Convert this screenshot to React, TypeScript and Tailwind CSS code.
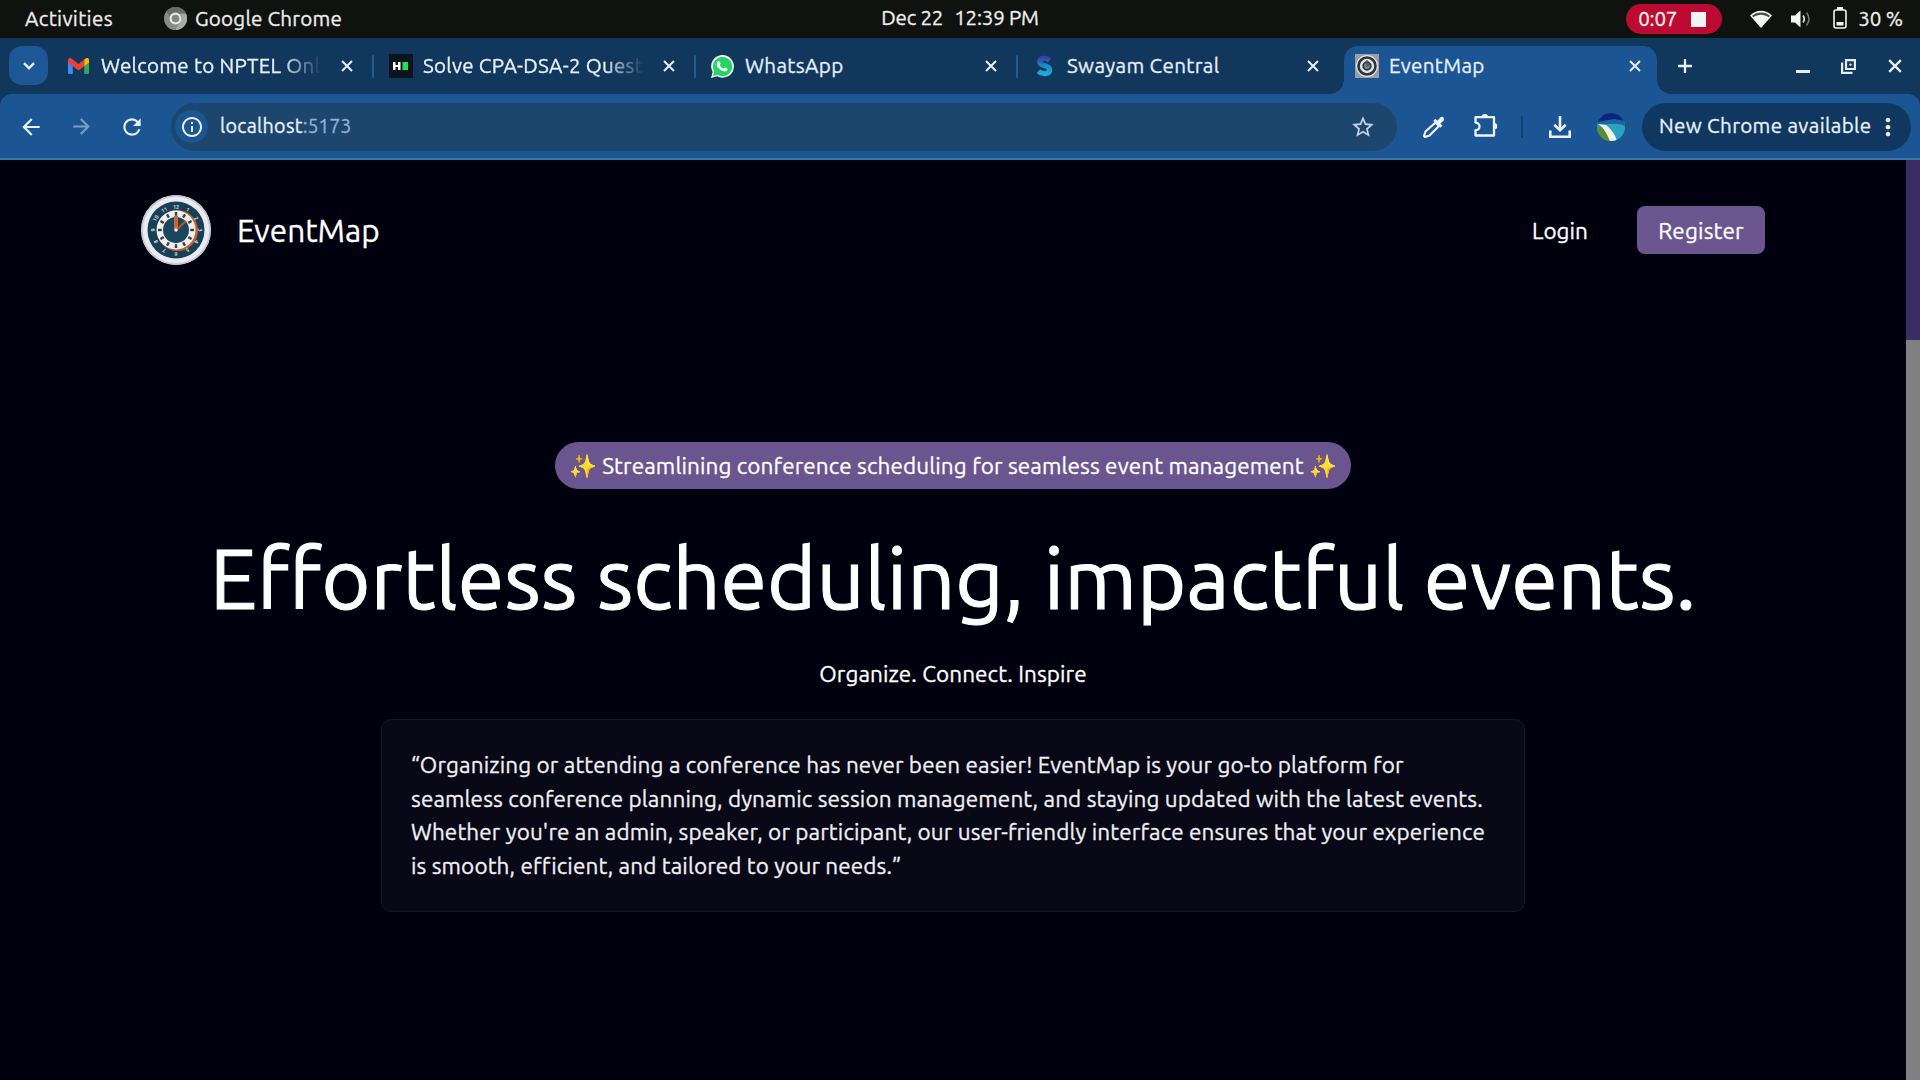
import type { ReactNode } from 'react';
import {
  MdArrowBack,
  MdArrowForward,
  MdRefresh,
  MdStarBorder,
  MdInfoOutline,
  MdMoreVert,
} from 'react-icons/md';

function Cross({ className }: { className: string }) {
  return (
    <svg viewBox="0 0 12 12" className={className} fill="none" stroke="currentColor" strokeWidth="2">
      <path d="M1 1l10 10M11 1L1 11" />
    </svg>
  );
}

function TopBar() {
  return (
    <header className="grid h-[38px] shrink-0 grid-cols-3 items-center bg-[#10120f] text-[20.6px] leading-none text-[#eeeeec]">
      <div className="flex items-center pt-px pl-[25px]">
        <span className="w-[139px] tracking-[0.35px]">Activities</span>
        <svg viewBox="0 0 24 24" className="mt-[-2px] mr-[8px] size-[23px] shrink-0">
          <circle cx="12" cy="12" r="12" fill="#8a8a88" />
          <path d="M12 0a12 12 0 0 1 11 7H12a5 5 0 0 0-5 4L2.500 5A12 12 0 0 1 12 0z" fill="#6b6b69" />
          <path d="M23 7a12 12 0 0 1-11 17l5-9a5 5 0 0 0 0-8z" fill="#a9a9a7" />
          <circle cx="12" cy="12" r="6.200" fill="#e8e8e6" />
          <circle cx="12" cy="12" r="4" fill="#858583" />
        </svg>
        <span className="tracking-[0.2px]">Google Chrome</span>
      </div>
      <div className="flex -translate-y-px justify-center gap-[11px] tracking-[-0.25px]">
        <span>Dec 22</span>
        <span>12:39 PM</span>
      </div>
      <div className="flex items-center justify-end pr-[17px]">
        <div className="mr-[28px] flex h-[30px] w-[96px] items-center justify-between rounded-full bg-[#bd0a32] pr-[16px] pl-[12px]">
          <span className="tracking-[-0.2px]">0:07</span>
          <span className="size-[15px] bg-[#f4f4f2]" />
        </div>
        <svg viewBox="0 0 22 18" className="mr-[19px] h-[18px] w-[22px]">
          <path d="M0 5.500C6-1 16-1 22 5.500L11 18z" fill="#f4f4f2" />
          <path d="M2 5.800C7 1.300 15 1.300 20 5.800L18.800 7.300C14 3.800 8 3.800 3.200 7.300z" fill="#4c4d4a" />
        </svg>
        <svg viewBox="0 0 20 18" className="mr-[22px] h-[18px] w-[20px]" fill="none">
          <path d="M0 5.500h4L9.500 0.500v17L4 12.500H0z" fill="#f4f4f2" />
          <path d="M12 5.500q2.500 3.500 0 7" stroke="#d8d8d6" strokeWidth="1.800" />
          <path d="M15.500 2.500q5 6.500 0 13" stroke="#777775" strokeWidth="1.600" />
        </svg>
        <svg viewBox="0 0 14 22" className="mr-[11px] mb-[3px] h-[22px] w-[14px]">
          <path d="M4 0h6v3H4z" fill="#f4f4f2" />
          <rect x="1" y="3" width="12" height="18" rx="2" fill="none" stroke="#f4f4f2" strokeWidth="1.600" />
          <path d="M3.500 15h7v3.500h-7z" fill="#f4f4f2" />
        </svg>
        <span className="tracking-[-0.1px]">30 %</span>
      </div>
    </header>
  );
}

function Tab({ icon, title, active, divider, fade }: { icon: ReactNode; title: string; active?: boolean; divider?: boolean; fade?: boolean }) {
  return (
    <div className="relative flex h-[48px] w-[322px] shrink-0 pl-[4px]">
      {active && (
        <>
          <span className="absolute bottom-0 left-[-10px] size-[14px] bg-[radial-gradient(circle_at_0_0,transparent_13.5px,#1b5593_14px)]" />
          <span className="absolute right-[-9px] bottom-0 size-[14px] bg-[radial-gradient(circle_at_100%_0,transparent_13.5px,#1b5593_14px)]" />
        </>
      )}
      <div className={active ? 'flex h-full w-[313px] rounded-t-[14px] bg-[#1b5593] pl-[12px]' : 'flex h-full w-[313px] pl-[12px]'}>
        <div className="flex h-[40px] items-center">
          <div className="flex w-[33px] shrink-0 items-center">{icon}</div>
          <span
            className={
              fade
                ? 'w-[221px] overflow-hidden whitespace-nowrap leading-[30px] tracking-[0.25px] [mask-image:linear-gradient(to_right,black_82%,transparent)]'
                : 'w-[221px] whitespace-nowrap leading-[30px] tracking-[0.33px]'
            }
          >
            {title}
          </span>
          <Cross className="ml-[19px] size-[12px] shrink-0" />
        </div>
      </div>
      {divider && <span className="absolute top-[9px] right-0 h-[23px] w-[2px] rounded-full bg-[#225c95]" />}
    </div>
  );
}

const gmail = (
  <svg viewBox="0 0 21 16" className="h-[16px] w-[21px]">
    <path d="M0 2.500L4.800 6v10H1.500A1.500 1.500 0 0 1 0 14.500z" fill="#4285f4" />
    <path d="M21 2.500L16.200 6v10h3.300a1.500 1.500 0 0 0 1.500-1.500z" fill="#34a853" />
    <path d="M16.200 1.500L18 .3c1.300-.8 3 0 3 1.700v2.500l-4.800 3.800z" fill="#fbbc04" />
    <path d="M0 2C0 .3 1.700-.5 3 .3L10.500 6 16.200 1.500v6.800L10.500 12.500 4.800 8.300 0 4.500z" fill="#ea4335" />
  </svg>
);

const hackerrank = (
  <svg viewBox="0 0 24 24" className="ml-[-1px] size-[24px]">
    <path d="M0 0h24v24H0z" fill="#0d141e" />
    <path d="M4 8h2.500v3H9V8h2.500v8H9v-3H6.500v3H4z" fill="#fff" />
    <path d="M13.500 8H19v8h-5.500z" fill="#1de34f" />
  </svg>
);

const whatsapp = (
  <svg viewBox="0 0 24 24" className="ml-[-1px] size-[23px]">
    <path d="M0 24l1.700-6.200A11.900 11.900 0 1 1 6.300 22.300z" fill="#e8fbee" />
    <path d="M2 22l1.400-4.900A10 10 0 1 1 7 20.700z" fill="#25d366" />
    <path
      d="M8.200 6.500c.5-.1.800 0 1 .5l.8 1.900c.1.300 0 .6-.9 1.600.8 1.700 2.200 3 4.100 3.800.9-1 1.100-1.400 1.500-1.200l2.200 1c.5.300.5 2-.8 2.700-1 .7-2.600.6-4.500-.3-2.300-1-4-3-4.900-4.400-1.200-2-.8-4.300.3-5.200.3-.3.700-.4 1.200-.4z"
      fill="#fff"
    />
  </svg>
);

const swayam = (
  <svg viewBox="0 0 18 22" className="ml-[2px] h-[22px] w-[17px]" fill="none">
    <defs>
      <linearGradient id="swayam" x1="0" y1="0" x2="0" y2="1">
        <stop offset="0" stopColor="#3d3fa8" />
        <stop offset=".4" stopColor="#1b86bf" />
        <stop offset="1" stopColor="#20a8d8" />
      </linearGradient>
    </defs>
    <path d="M14.500 5C11 2 4 2 4 6.500c0 5 10.500 3 10.500 8.500 0 5-8 5-12 1.500" stroke="url(#swayam)" strokeWidth="5.600" />
  </svg>
);

const eventmap = (
  <svg viewBox="0 0 24 24" className="ml-[-1px] size-[24px]" fill="none">
    <path d="M0 0h24v24H0z" fill="#9c9e9f" />
    <circle cx="12" cy="12" r="11" fill="#e4e4e2" />
    <circle cx="12" cy="12" r="8.500" stroke="#2a3440" strokeWidth="2.600" />
    <circle cx="12" cy="12" r="3.800" fill="#7b8790" stroke="#2a3440" strokeWidth="1.800" />
    <path d="M12 6v6l2.500-2" stroke="#5a4a42" strokeWidth="1.200" />
  </svg>
);

function TabStrip() {
  return (
    <div className="flex h-[56px] shrink-0 bg-[#11375d] pt-[8px] text-[20.6px] leading-none text-[#e6eef8]">
      <div className="w-[52px] shrink-0 pl-[9px]">
        <div className="flex h-[39px] w-[39px] items-center justify-center rounded-[13px] bg-[#1d5795]">
          <svg viewBox="0 0 12 8" className="h-[8px] w-[12px]" fill="none" stroke="currentColor" strokeWidth="2.400">
            <path d="M1 1.200l5 5 5-5" />
          </svg>
        </div>
      </div>
      <Tab icon={gmail} title="Welcome to NPTEL Onl" divider fade />
      <Tab icon={hackerrank} title="Solve CPA-DSA-2 Quest" divider fade />
      <Tab icon={whatsapp} title="WhatsApp" divider />
      <Tab icon={swayam} title="Swayam Central" />
      <Tab icon={eventmap} title="EventMap" active />
      <div className="flex h-[40px] flex-1 items-center pr-[18px] pl-[16px]">
        <svg viewBox="0 0 14 14" className="size-[14px]" fill="none" stroke="currentColor" strokeWidth="2.300">
          <path d="M7 0v14M0 7h14" />
        </svg>
        <span className="mt-[11px] ml-auto h-[3px] w-[14px] bg-[#e6eef8]" />
        <svg viewBox="0 0 15 15" className="ml-[31px] size-[15px]" fill="none" stroke="currentColor" strokeWidth="2.200">
          <path d="M5 1.100h8.900v8.900H5zM1.100 3.500v10.400H11.500" />
          <path d="M8.800 5h1.300v1.300H8.800z" strokeWidth="1" />
        </svg>
        <Cross className="ml-[32px] size-[14px]" />
      </div>
    </div>
  );
}

function Toolbar() {
  return (
    <div className="h-[66px] shrink-0 bg-[#11375d]">
      <div className="flex h-full items-center rounded-t-[12px] border-b-2 border-[#3b74a8] bg-[#1b5593] pt-px pr-[9px] text-[19.7px] leading-none text-[#e8f0fa]">
        <MdArrowBack className="ml-[18px] size-[26px]" />
        <MdArrowForward className="ml-[25px] size-[25px] text-[#7d9fc4]" />
        <MdRefresh className="ml-[25px] size-[26px]" />
        <div className="ml-[26px] flex h-[48px] w-[1226px] items-center rounded-full bg-[#1c466e] pr-[21px] pl-[4px]">
          <span className="flex size-[33px] items-center justify-center rounded-full bg-[#1b5593]">
            <MdInfoOutline className="size-[24px]" />
          </span>
          <span className="ml-[12px] tracking-[0.3px]">localhost</span>
          <span className="tracking-[-0.2px] text-[#8fb0d3]">:5173</span>
          <MdStarBorder className="ml-auto size-[26px] text-[#c5d3e4]" />
        </div>
        <svg viewBox="0 0 24 24" className="ml-[25px] size-[24px]" fill="none">
          <path d="M13.500 7.500l3.500 3.500L7.500 20.500 3 22l-1-1 1.500-4.500z" stroke="#eef3fb" strokeWidth="2.200" strokeLinejoin="round" />
          <path d="M11.300 5.800l2-2 2.200 2L18.300 2.500c2-2 5 1 3.200 3.200L18.400 8.600l2 2.100-2 2z" fill="#eef3fb" />
        </svg>
        <svg viewBox="0 0 24 24" className="mb-[3px] ml-[28px] size-[24px]" fill="none" stroke="#eef3fb" strokeWidth="2.300" strokeLinejoin="round">
          <path d="M1.500 4.200H20v18.300H1.500v-5.300c2.300 0 4-1.700 4-3.800s-1.700-3.800-4-3.800z" />
          <path d="M7.500 4.200a3.300 3.300 0 0 1 6.600 0zM20 10a3.200 3.200 0 0 1 0 6.500z" fill="#eef3fb" stroke="none" />
        </svg>
        <span className="ml-[23px] h-[22px] w-[2px] bg-[#123f72]" />
        <svg viewBox="0 0 22 22" className="ml-[26px] size-[22px]" fill="none" stroke="#eef3fb" strokeWidth="2.600">
          <path d="M11 0v14M5.300 8.700L11 14.300l5.700-5.600M1.300 14.500v6.200h19.400v-6.200" />
        </svg>
        <svg viewBox="0 0 28 28" className="ml-[26px] size-[28px]">
          <defs>
            <clipPath id="avatar"><circle cx="14" cy="14" r="14" /></clipPath>
          </defs>
          <g clipPath="url(#avatar)">
            <path d="M0 0h28v28H0z" fill="#2ba3bf" />
            <path d="M0 0h28v13C20 9 10 12 0 11z" fill="#1565a8" />
            <path d="M0 0h28v8L17 6 0 9z" fill="#0b2578" />
            <path d="M0 14l6 0 8 14H0z" fill="#5d8a34" />
            <path d="M1 11l8 1c5 4 9 9 11 16h-7C10 21 7 15 1 11z" fill="#f0f2ea" />
          </g>
        </svg>
        <div className="ml-auto flex h-[48px] w-[269px] items-center rounded-full bg-[#10375f] pl-[17px] text-[20.6px]">
          <span className="whitespace-nowrap tracking-[0.33px]">New Chrome available</span>
          <MdMoreVert className="ml-[3px] size-[28px] shrink-0" />
        </div>
      </div>
    </div>
  );
}

const outerHours = ['12', '1', '2', '3', '4', '5', '6', '7', '8', '9', '10', '11'];

function ClockLogo() {
  return (
    <svg viewBox="0 0 70 70" className="size-[70px]">
      <circle cx="35" cy="35" r="35" fill="#e9ebf1" />
      <circle cx="35" cy="35" r="34" fill="none" stroke="#c3c6d2" strokeWidth="1.500" />
      <circle cx="35" cy="35" r="28.500" fill="#173f56" />
      <circle cx="36.500" cy="35.500" r="20.500" fill="#c0622f" />
      <circle cx="35" cy="35" r="19.500" fill="#f1efec" />
      <circle cx="35" cy="35" r="13" fill="#1b4660" />
      {outerHours.map((hour, i) => (
        <g key={hour} transform={`rotate(${i * 30} 35 35)`}>
          <text x="35" y="13.500" textAnchor="middle" fontSize="5.500" fontWeight="700" fill="#d5dde2">{hour}</text>
          <rect x="33.800" y="17" width="2.400" height="3.800" fill="#33414c" />
        </g>
      ))}
      <path d="M35 35V21" stroke="#d0642c" strokeWidth="4" />
      <path d="M35 35l10-9" stroke="#b9572b" strokeWidth="2.200" />
      <circle cx="35" cy="35" r="1.800" fill="#e9ebf1" />
    </svg>
  );
}

function Page() {
  return (
    <div className="flex flex-1 bg-[#01000f] text-[22.5px] text-white">
      <main className="flex flex-1 flex-col items-center">
        <nav className="mt-[35px] flex h-[70px] w-[1624px] items-center">
          <ClockLogo />
          <span className="mt-[2px] ml-[26px] text-[31.6px] leading-none">EventMap</span>
          <a className="mt-px ml-auto tracking-[0.05px]">Login</a>
          <a className="ml-[49px] flex h-[48px] w-[128px] items-center justify-center rounded-[8px] bg-[#6b558f] pt-px tracking-[0.15px]">Register</a>
        </nav>
        <div className="mt-[177px] flex h-[47px] w-[796px] items-center justify-center rounded-full bg-[#6b558f] whitespace-nowrap tracking-[0.11px]">
          ✨ Streamlining conference scheduling for seamless event management ✨
        </div>
        <h1 className="mt-[47px] text-[84.3px] leading-[84px] whitespace-nowrap [-webkit-text-stroke:1px_white]">Effortless scheduling, impactful events.</h1>
        <p className="mt-[37px] leading-[34px] tracking-[0.08px]">Organize. Connect. Inspire</p>
        <blockquote className="mt-[28px] h-[193px] w-[1144px] rounded-[10px] border border-[#17152a] bg-[#090817] px-[29px] pt-[28px] leading-[33.730px] whitespace-nowrap text-[#f0f0f4] tracking-[0.11px]">
          “Organizing or attending a conference has never been easier! EventMap is your go-to platform for
          <br />
          seamless conference planning, dynamic session management, and staying updated with the latest events.
          <br />
          Whether you're an admin, speaker, or participant, our user-friendly interface ensures that your experience
          <br />
          is smooth, efficient, and tailored to your needs.”
        </blockquote>
      </main>
      <div className="w-[14px] bg-[#808082]">
        <div className="h-[180px] bg-[#3a2d66]" />
      </div>
    </div>
  );
}

export default function App() {
  return (
    <div className="flex h-screen w-full flex-col overflow-hidden font-['Ubuntu','Noto_Sans',sans-serif] [-webkit-text-stroke:0.3px_currentColor]">
      <TopBar />
      <TabStrip />
      <Toolbar />
      <Page />
    </div>
  );
}
